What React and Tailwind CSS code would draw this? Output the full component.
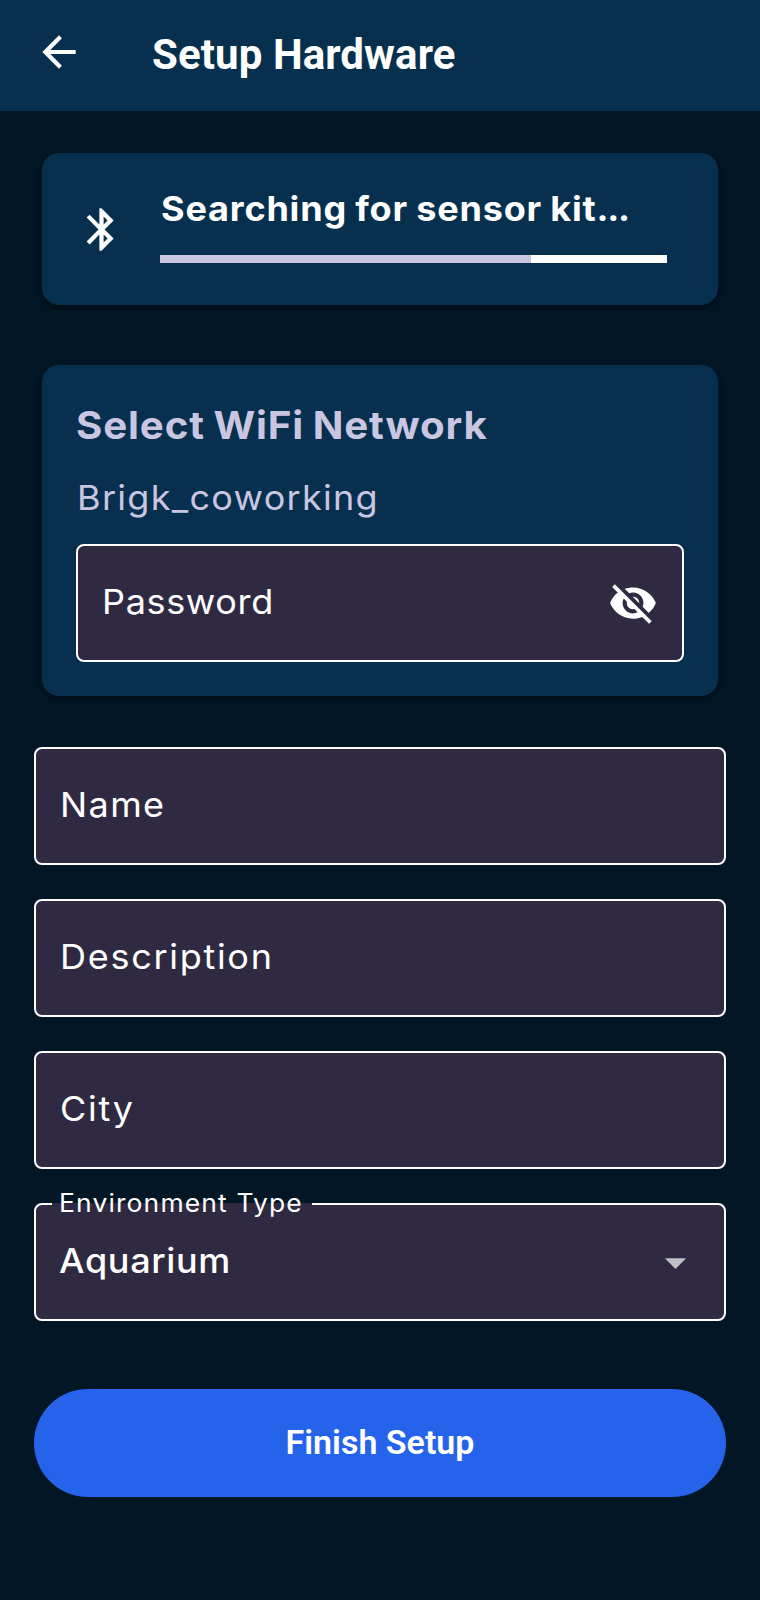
import { MdArrowBack, MdArrowDropDown, MdBluetooth, MdVisibilityOff } from 'react-icons/md';

const PROGRESS = 73.2;

const card =
  'rounded-[17px] bg-[#072f4e] shadow-[0_3px_7px_rgba(0,0,0,0.45)]';

const wide = 'origin-left scale-x-106 whitespace-nowrap';

function Field({ label, className, labelClass, children }) {
  return (
    <div
      className={`flex h-[118px] items-center justify-between rounded-[8px] border-2 border-white bg-[#2f2a41] pb-[2px] pl-[24px] ${className}`}
    >
      <span className={`text-[34px] leading-[44px] font-[380] ${wide} ${labelClass}`}>{label}</span>
      {children}
    </div>
  );
}

export default function App() {
  return (
    <div className="h-[1600px] w-[760px] overflow-hidden bg-[#021625] font-[Inter,sans-serif] text-white">
      <header className="flex h-[111px] items-center bg-[#072f4e] pb-[7px] pl-[34px]">
        <MdArrowBack className="size-[50px]" />
        <h1 className="mt-[5px] ml-[68px] font-[Roboto,sans-serif] text-[42px] leading-[50px] font-bold tracking-[0.1px]">
          Setup Hardware
        </h1>
      </header>

      <section className={`mx-[42px] mt-[42px] flex h-[152px] pl-[34px] ${card}`}>
        <MdBluetooth className="mt-[51px] size-[51px] shrink-0" />
        <div className="ml-[33px] w-[507px] pt-[34px]">
          <p className={`pl-[1px] text-[34px] leading-[44px] font-bold tracking-[0.75px] [word-spacing:-1px] ${wide}`}>
            Searching for sensor kit<span className="tracking-[-1.3px]">...</span>
          </p>
          <div className="mt-[24px] h-[8px] bg-white">
            <div className="h-full bg-[#cac5e0]" style={{ width: `${PROGRESS}%` }} />
          </div>
        </div>
      </section>

      <section className={`mx-[42px] mt-[60px] h-[331px] px-[34px] pt-[35px] ${card}`}>
        <h2 className={`text-[38px] leading-[50px] font-bold tracking-[0.8px] [word-spacing:-1.7px] text-[#cac5e0] ${wide}`}>
          Select WiFi Network
        </h2>
        <p className={`mt-[26px] pl-[1px] text-[34px] leading-[44px] tracking-[1.2px] text-[#cac5e0] ${wide}`}>
          Brigk_coworking
        </p>
        <Field label="Password" className="mt-[24px] pr-[24px]" labelClass="tracking-[0.6px]">
          <MdVisibilityOff className="mt-[2px] size-[50px]" />
        </Field>
      </section>

      <form className="mx-[34px] mt-[51px] flex flex-col">
        <Field label="Name" labelClass="tracking-[1.3px]" />
        <Field label="Description" className="mt-[34px]" labelClass="tracking-[1.6px]" />
        <Field label="City" className="mt-[34px]" labelClass="tracking-[1.6px]" />

        <fieldset className="mt-[20px] h-[132px] rounded-[8px] border-2 border-white bg-[#2f2a41] pl-[16px]">
          <legend className="h-[30px] w-[260px] px-[7px]">
            <div className={`text-[25px] leading-[29px] tracking-[1.05px] ${wide}`}>Environment Type</div>
          </legend>
          <div className="flex h-[84px] items-center justify-between pr-[23px] pl-[7px]">
            <span className={`text-[34px] leading-[44px] font-medium tracking-[0.6px] ${wide}`}>Aquarium</span>
            <MdArrowDropDown className="mt-[2px] size-[51px] text-[#c2bfc9]" />
          </div>
        </fieldset>

        <button
          type="button"
          className="mt-[68px] h-[108px] rounded-full bg-[#2563eb] pb-[3px] font-[Roboto,sans-serif] text-[34px] leading-[44px] font-semibold"
        >
          Finish Setup
        </button>
      </form>
    </div>
  );
}
